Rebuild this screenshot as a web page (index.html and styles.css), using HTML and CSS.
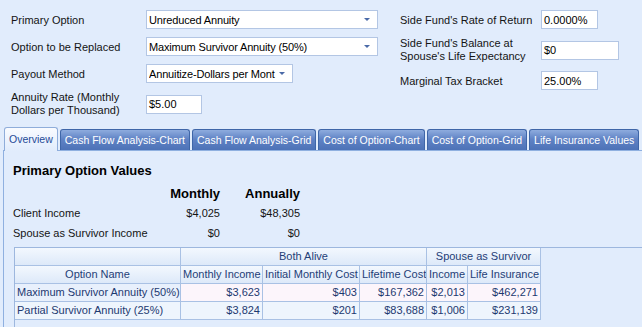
FILE: index.html
```html
<!DOCTYPE html>
<html lang="en">
<head>
  <meta charset="UTF-8">
  <title>Survivor Option Analysis</title>
  <link rel="stylesheet" href="styles.css">
</head>
<body>

<div class="options">
  <div class="col col-left">
    <div class="row">
      <label class="lbl">Primary Option</label>
      <div class="field combo w-wide"><span class="val">Unreduced Annuity</span><i class="arrow"></i></div>
    </div>
    <div class="row">
      <label class="lbl">Option to be Replaced</label>
      <div class="field combo w-wide"><span class="val">Maximum Survivor Annuity (50%)</span><i class="arrow"></i></div>
    </div>
    <div class="row">
      <label class="lbl">Payout Method</label>
      <div class="field combo w-mid"><span class="val">Annuitize-Dollars per Mont</span><i class="arrow"></i></div>
    </div>
    <div class="row tall">
      <label class="lbl two">Annuity Rate (Monthly<br>Dollars per Thousand)</label>
      <div class="field w-tiny">$5.00</div>
    </div>
  </div>

  <div class="col col-right">
    <div class="row">
      <label class="lbl">Side Fund's Rate of Return</label>
      <div class="field w-small">0.0000%</div>
    </div>
    <div class="row tall">
      <label class="lbl two">Side Fund's Balance at<br>Spouse's Life Expectancy</label>
      <div class="field w-med">$0</div>
    </div>
    <div class="row">
      <label class="lbl">Marginal Tax Bracket</label>
      <div class="field w-small">25.00%</div>
    </div>
  </div>
</div>

<div class="tabs">
  <div class="tab active">Overview</div>
  <div class="tab">Cash Flow Analysis-Chart</div>
  <div class="tab">Cash Flow Analysis-Grid</div>
  <div class="tab">Cost of Option-Chart</div>
  <div class="tab">Cost of Option-Grid</div>
  <div class="tab">Life Insurance Values</div>
</div>

<div class="panel">
  <h2>Primary Option Values</h2>

  <div class="summary">
    <div></div>
    <div class="num head">Monthly</div>
    <div class="num head">Annually</div>

    <div>Client Income</div>
    <div class="num">$4,025</div>
    <div class="num">$48,305</div>

    <div>Spouse as Survivor Income</div>
    <div class="num">$0</div>
    <div class="num">$0</div>
  </div>

  <div class="grid">
    <div class="cell hd"></div>
    <div class="cell hd span3">Both Alive</div>
    <div class="cell hd span2">Spouse as Survivor</div>

    <div class="cell hd">Option Name</div>
    <div class="cell hd">Monthly Income</div>
    <div class="cell hd">Initial Monthly Cost</div>
    <div class="cell hd">Lifetime Cost</div>
    <div class="cell hd">Income</div>
    <div class="cell hd">Life Insurance</div>

    <div class="cell name focus">Maximum Survivor Annuity (50%)</div>
    <div class="cell num focus-val">$3,623</div>
    <div class="cell num focus-val">$403</div>
    <div class="cell num focus-val">$167,362</div>
    <div class="cell num focus-val">$2,013</div>
    <div class="cell num focus-val">$462,271</div>

    <div class="cell name">Partial Survivor Annuity (25%)</div>
    <div class="cell num">$3,824</div>
    <div class="cell num">$201</div>
    <div class="cell num">$83,688</div>
    <div class="cell num">$1,006</div>
    <div class="cell num">$231,139</div>
  </div>
</div>

</body>
</html>
```

FILE: styles.css
```css
body { margin: 0; width: 642px; height: 327px; overflow: hidden; background: #e1ecfc; font-family: "Liberation Sans", Arial, sans-serif; font-size: 11px; color: #141414; }

.options { display: flex; padding: 10px 0 0 11px; }
.col { display: flex; flex-direction: column; gap: 8px; }
.col-left { width: 389px; }
.row { display: flex; align-items: center; height: 19px; }
.row.tall { height: 26px; }
.col-left .lbl { width: 135px; }
.col-right .lbl { width: 141px; }
.lbl.two { line-height: 13px; }

.field { height: 19px; box-sizing: border-box; border: 1px solid #b3c6e4; background: #fff; display: flex; align-items: center; padding-left: 2px; white-space: nowrap; overflow: hidden; color: #000; }
.combo .val { flex: 1; min-width: 0; overflow: hidden; letter-spacing: -0.15px; }
.combo .arrow { flex: none; margin: 0 7px 0 2px; border-left: 3px solid transparent; border-right: 3px solid transparent; border-top: 3px solid #4a6aa8; }
.w-wide { width: 232px; }
.w-mid { width: 147px; }
.w-tiny { width: 56px; }
.w-small { width: 57px; }
.w-med { width: 78px; }

.tabs { display: flex; align-items: flex-end; gap: 2px; height: 23px; margin-top: 10px; padding-left: 4px; }
.tab { height: 21px; box-sizing: border-box; padding: 1px 4px 0; line-height: 19px; font-size: 10.5px; white-space: nowrap; color: #fff; border: 1px solid #3f66a8; border-bottom: none; border-radius: 3px 3px 0 0; background: linear-gradient(#8eacde, #6083c5 45%, #4d72b7); }
.tab.active { position: relative; z-index: 1; height: 24px; margin-bottom: -1px; padding-top: 2px; color: #1f4b98; border-color: #8fadda; background: linear-gradient(#f9fbff, #e1ecfc); }

.panel { margin-left: 3px; padding: 11px 0 0 9px; border-left: 1px solid #8fb0e0; border-top: 1px solid #8fb0e0; }
.panel h2 { margin: 0; font-size: 13px; line-height: 17px; font-weight: bold; color: #000; }

.summary { display: grid; grid-template-columns: 130px 77px 80px; grid-auto-rows: 20px; align-items: center; margin-top: 4px; white-space: nowrap; }
.summary .num { text-align: right; }
.summary .head { font-size: 13px; font-weight: bold; color: #000; }

.grid { display: grid; grid-template-columns: 166px 82px 97px 67px 41px 73px; grid-auto-rows: 18px; align-content: start; height: 79px; margin: 4px 0 0 1px; border-top: 1px solid #9db7de; border-left: 1px solid #9db7de; color: #1d3970; }
.cell { box-sizing: border-box; padding: 0 2px; line-height: 17px; white-space: nowrap; overflow: hidden; border-right: 1px solid #a9c1e4; border-bottom: 1px solid #a9c1e4; background: #eef5fd; }
.cell.hd { text-align: center; color: #1f3e77; background: linear-gradient(#f3f8fe, #dde9f9); }
.span3 { grid-column: span 3; }
.span2 { grid-column: span 2; }
.cell.num { text-align: right; }
.cell.focus { background: #e8f0fc; }
.cell.focus-val { background: #fcf5fb; }
```
